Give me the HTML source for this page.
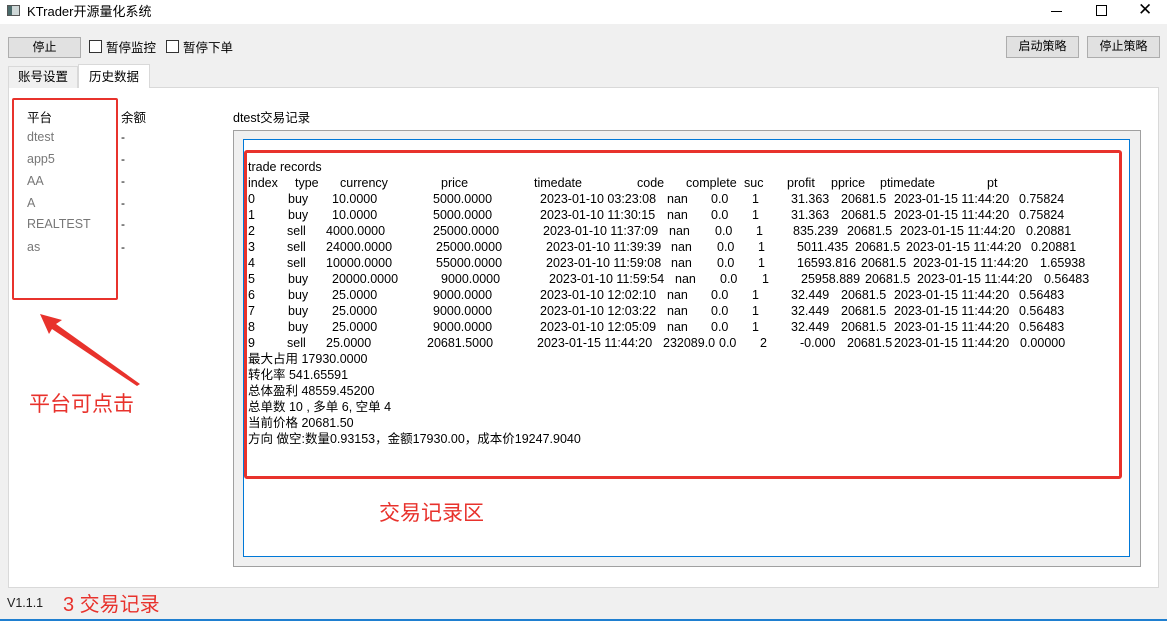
<!DOCTYPE html>
<html><head><meta charset="utf-8">
<style>
*{margin:0;padding:0;box-sizing:border-box}
body{width:1167px;height:621px;background:#f0f0f0;position:relative;overflow:hidden;font-family:"Liberation Sans","Noto Sans CJK SC",sans-serif;font-size:12px;color:#000}
.a{position:absolute;white-space:nowrap}
.btn{position:absolute;background:#e1e1e1;border:1px solid #adadad;text-align:center;font-size:12px;line-height:19px}
.cb{position:absolute;width:13px;height:13px;border:1px solid #333;background:#fff}
.r{position:absolute;height:16px;line-height:16px;font-size:12.5px}
.r span{position:absolute;white-space:nowrap}
.g{color:#777}
.red{color:#e8322c}
</style></head><body>
<div class="a" style="left:0;top:0;width:1167px;height:24px;background:#fff"></div>
<div class="a" style="left:7px;top:5px;width:13px;height:11px;border:1px solid #555;background:#cfd8d8"></div>
<div class="a" style="left:8px;top:6px;width:4px;height:9px;background:#4a6a6a"></div>
<div class="a" style="left:27px;top:1px;font-size:13px">KTrader开源量化系统</div>
<div class="a" style="left:1051px;top:11px;width:11px;height:1px;background:#000"></div>
<div class="a" style="left:1096px;top:5px;width:11px;height:11px;border:1px solid #000"></div>
<div class="a" style="left:1138px;top:0px;font-size:17px;line-height:20px">✕</div>

<div class="btn" style="left:8px;top:37px;width:73px;height:21px">停止</div>
<div class="cb" style="left:89px;top:40px"></div>
<div class="a" style="left:106px;top:37px;font-size:12.5px">暂停监控</div>
<div class="cb" style="left:166px;top:40px"></div>
<div class="a" style="left:183px;top:37px;font-size:12.5px">暂停下单</div>
<div class="btn" style="left:1006px;top:36px;width:73px;height:22px">启动策略</div>
<div class="btn" style="left:1087px;top:36px;width:73px;height:22px">停止策略</div>

<div class="a" style="left:8px;top:87px;width:1151px;height:501px;background:#fff;border:1px solid #d9d9d9"></div>
<div class="a" style="left:8px;top:66px;width:70px;height:22px;border:1px solid #d9d9d9;border-bottom:none;background:#f0f0f0;text-align:center;line-height:21px;font-size:12.5px">账号设置</div>
<div class="a" style="left:78px;top:64px;width:72px;height:24px;border:1px solid #d9d9d9;border-bottom:none;background:#fff;text-align:center;line-height:24px;font-size:12.5px">历史数据</div>

<div class="a" style="left:27px;top:107px;font-size:12.5px">平台</div>
<div class="a" style="left:121px;top:107px;font-size:12.5px">余额</div>
<div class="a g" style="left:27px;top:130px;font-size:12.5px">dtest</div>
<div class="a g" style="left:27px;top:152px;font-size:12.5px">app5</div>
<div class="a g" style="left:27px;top:174px;font-size:12.5px">AA</div>
<div class="a g" style="left:27px;top:196px;font-size:12.5px">A</div>
<div class="a g" style="left:27px;top:217px;font-size:12.5px">REALTEST</div>
<div class="a g" style="left:27px;top:240px;font-size:12.5px">as</div>
<div class="a" style="left:121px;top:130px">-</div>
<div class="a" style="left:121px;top:152px">-</div>
<div class="a" style="left:121px;top:174px">-</div>
<div class="a" style="left:121px;top:196px">-</div>
<div class="a" style="left:121px;top:217px">-</div>
<div class="a" style="left:121px;top:240px">-</div>
<div class="a" style="left:12px;top:98px;width:106px;height:202px;border:2px solid #e8322c;border-radius:2px"></div>
<svg class="a" style="left:36px;top:312px" width="110" height="76"><polygon points="4,2 26,8 20,12 104,72 101,74 16,17 13,22" fill="#e8322c"/></svg>
<div class="a red" style="left:29px;top:388px;font-size:21px">平台可点击</div>

<div class="a" style="left:233px;top:107px;font-size:12.5px">dtest交易记录</div>
<div class="a" style="left:233px;top:130px;width:908px;height:437px;border:1px solid #a0a0a0;background:#f0f0f0"></div>
<div class="a" style="left:243px;top:139px;width:887px;height:418px;border:1px solid #0078d7;background:#fff"></div>
<div class="a" style="left:244px;top:150px;width:878px;height:329px;border:3px solid #e8322c;border-radius:3px"></div>
<div class="a red" style="left:379px;top:497px;font-size:21px">交易记录区</div>

<div class="r" style="left:0;top:159px"><span style="left:248px">trade records</span></div>
<div class="r" style="left:0;top:175px"><span style="left:248px">index</span><span style="left:295px">type</span><span style="left:340px">currency</span><span style="left:441px">price</span><span style="left:534px">timedate</span><span style="left:637px">code</span><span style="left:686px">complete</span><span style="left:744px">suc</span><span style="left:787px">profit</span><span style="left:831px">pprice</span><span style="left:880px">ptimedate</span><span style="left:987px">pt</span></div>
<div class="r" style="left:0;top:191px"><span style="left:248px">0</span><span style="left:288px">buy</span><span style="left:332px">10.0000</span><span style="left:433px">5000.0000</span><span style="left:540px">2023-01-10 03:23:08</span><span style="left:667px">nan</span><span style="left:711px">0.0</span><span style="left:752px">1</span><span style="left:791px">31.363</span><span style="left:841px">20681.5</span><span style="left:894px">2023-01-15 11:44:20</span><span style="left:1019px">0.75824</span></div>
<div class="r" style="left:0;top:207px"><span style="left:248px">1</span><span style="left:288px">buy</span><span style="left:332px">10.0000</span><span style="left:433px">5000.0000</span><span style="left:540px">2023-01-10 11:30:15</span><span style="left:667px">nan</span><span style="left:711px">0.0</span><span style="left:752px">1</span><span style="left:791px">31.363</span><span style="left:841px">20681.5</span><span style="left:894px">2023-01-15 11:44:20</span><span style="left:1019px">0.75824</span></div>
<div class="r" style="left:0;top:223px"><span style="left:248px">2</span><span style="left:287px">sell</span><span style="left:326px">4000.0000</span><span style="left:433px">25000.0000</span><span style="left:543px">2023-01-10 11:37:09</span><span style="left:669px">nan</span><span style="left:715px">0.0</span><span style="left:756px">1</span><span style="left:793px">835.239</span><span style="left:847px">20681.5</span><span style="left:900px">2023-01-15 11:44:20</span><span style="left:1026px">0.20881</span></div>
<div class="r" style="left:0;top:239px"><span style="left:248px">3</span><span style="left:287px">sell</span><span style="left:326px">24000.0000</span><span style="left:436px">25000.0000</span><span style="left:546px">2023-01-10 11:39:39</span><span style="left:671px">nan</span><span style="left:717px">0.0</span><span style="left:758px">1</span><span style="left:797px">5011.435</span><span style="left:855px">20681.5</span><span style="left:906px">2023-01-15 11:44:20</span><span style="left:1031px">0.20881</span></div>
<div class="r" style="left:0;top:255px"><span style="left:248px">4</span><span style="left:287px">sell</span><span style="left:326px">10000.0000</span><span style="left:436px">55000.0000</span><span style="left:546px">2023-01-10 11:59:08</span><span style="left:671px">nan</span><span style="left:717px">0.0</span><span style="left:758px">1</span><span style="left:797px">16593.816</span><span style="left:861px">20681.5</span><span style="left:913px">2023-01-15 11:44:20</span><span style="left:1040px">1.65938</span></div>
<div class="r" style="left:0;top:271px"><span style="left:248px">5</span><span style="left:288px">buy</span><span style="left:332px">20000.0000</span><span style="left:441px">9000.0000</span><span style="left:549px">2023-01-10 11:59:54</span><span style="left:675px">nan</span><span style="left:720px">0.0</span><span style="left:762px">1</span><span style="left:801px">25958.889</span><span style="left:865px">20681.5</span><span style="left:917px">2023-01-15 11:44:20</span><span style="left:1044px">0.56483</span></div>
<div class="r" style="left:0;top:287px"><span style="left:248px">6</span><span style="left:288px">buy</span><span style="left:332px">25.0000</span><span style="left:433px">9000.0000</span><span style="left:540px">2023-01-10 12:02:10</span><span style="left:667px">nan</span><span style="left:711px">0.0</span><span style="left:752px">1</span><span style="left:791px">32.449</span><span style="left:841px">20681.5</span><span style="left:894px">2023-01-15 11:44:20</span><span style="left:1019px">0.56483</span></div>
<div class="r" style="left:0;top:303px"><span style="left:248px">7</span><span style="left:288px">buy</span><span style="left:332px">25.0000</span><span style="left:433px">9000.0000</span><span style="left:540px">2023-01-10 12:03:22</span><span style="left:667px">nan</span><span style="left:711px">0.0</span><span style="left:752px">1</span><span style="left:791px">32.449</span><span style="left:841px">20681.5</span><span style="left:894px">2023-01-15 11:44:20</span><span style="left:1019px">0.56483</span></div>
<div class="r" style="left:0;top:319px"><span style="left:248px">8</span><span style="left:288px">buy</span><span style="left:332px">25.0000</span><span style="left:433px">9000.0000</span><span style="left:540px">2023-01-10 12:05:09</span><span style="left:667px">nan</span><span style="left:711px">0.0</span><span style="left:752px">1</span><span style="left:791px">32.449</span><span style="left:841px">20681.5</span><span style="left:894px">2023-01-15 11:44:20</span><span style="left:1019px">0.56483</span></div>
<div class="r" style="left:0;top:335px"><span style="left:248px">9</span><span style="left:287px">sell</span><span style="left:326px">25.0000</span><span style="left:427px">20681.5000</span><span style="left:537px">2023-01-15 11:44:20</span><span style="left:663px">232089.0</span><span style="left:719px">0.0</span><span style="left:760px">2</span><span style="left:800px">-0.000</span><span style="left:847px">20681.5</span><span style="left:894px">2023-01-15 11:44:20</span><span style="left:1020px">0.00000</span></div>
<div class="r" style="left:0;top:351px"><span style="left:248px">最大占用 17930.0000</span></div>
<div class="r" style="left:0;top:367px"><span style="left:248px">转化率 541.65591</span></div>
<div class="r" style="left:0;top:383px"><span style="left:248px">总体盈利 48559.45200</span></div>
<div class="r" style="left:0;top:399px"><span style="left:248px">总单数 10 , 多单 6, 空单 4</span></div>
<div class="r" style="left:0;top:415px"><span style="left:248px">当前价格 20681.50</span></div>
<div class="r" style="left:0;top:431px"><span style="left:248px">方向 做空:数量0.93153，金额17930.00，成本价19247.9040</span></div>

<div class="a" style="left:7px;top:596px;font-size:12.5px;color:#222">V1.1.1</div>
<div class="a red" style="left:63px;top:588px;font-size:20px">3 交易记录</div>
<div class="a" style="left:0;top:619px;width:1167px;height:2px;background:#1f7fd0"></div>
</body></html>
